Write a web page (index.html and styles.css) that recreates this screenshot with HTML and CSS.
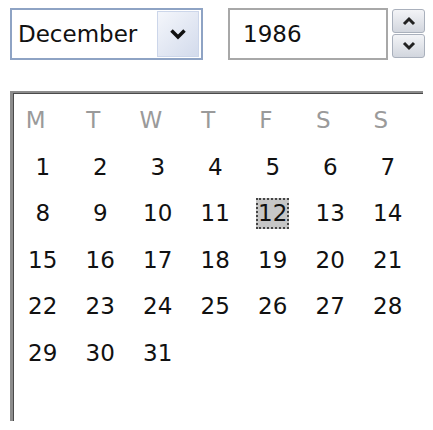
FILE: index.html
```html
<!DOCTYPE html>
<html lang="en">

<head>
    <meta charset="UTF-8" />
    <meta name="viewport" content="width=device-width" />
    <link rel="stylesheet" href="styles.css">
</head>

<body>
    <main class="picker">
        <div class="top">
            <div class="select">
                <span class="value">December</span>
                <span class="drop">
                    <svg width="18" height="14" viewBox="0 0 18 14"><path d="M2.5 3.5 L9 10 L15.5 3.5" fill="none" stroke="#111" stroke-width="3.5"/></svg>
                </span>
            </div>
            <div class="year">1986</div>
            <div class="spin">
                <span class="spin_btn">
                    <svg width="16" height="10" viewBox="0 0 16 10"><path d="M3 8 L8 3 L13 8" fill="none" stroke="#222" stroke-width="3"/></svg>
                </span>
                <span class="spin_btn">
                    <svg width="16" height="10" viewBox="0 0 16 10"><path d="M3 2 L8 7 L13 2" fill="none" stroke="#222" stroke-width="3"/></svg>
                </span>
            </div>
        </div>

        <div class="cal">
            <div class="grid">
                <span class="head">M</span><span class="head">T</span><span class="head">W</span><span class="head">T</span><span class="head">F</span><span class="head">S</span><span class="head">S</span>
                <span>1</span><span>2</span><span>3</span><span>4</span><span>5</span><span>6</span><span>7</span>
                <span>8</span><span>9</span><span>10</span><span>11</span><span><b class="today">12</b></span><span>13</span><span>14</span>
                <span>15</span><span>16</span><span>17</span><span>18</span><span>19</span><span>20</span><span>21</span>
                <span>22</span><span>23</span><span>24</span><span>25</span><span>26</span><span>27</span><span>28</span>
                <span>29</span><span>30</span><span>31</span>
            </div>
        </div>
    </main>
</body>

</html>
```

FILE: styles.css
```css
/* === date picker === */

body {
    margin: 0;
    background: #fff;
    font-family: "DejaVu Sans", sans-serif;
    font-size: 23px;
    color: #111;
}

.picker {
    /* outer spacing */
    padding: 8px 0 0 10px;
}

.top {
    /* month + year row */
    display: flex;
    align-items: flex-start;
    height: 52px;
}

.select {
    /* month box */
    box-sizing: border-box;
    width: 193px;
    height: 52px;
    border: 2px solid #8ea3c4;
    display: flex;
    align-items: center;
    padding-left: 6px;
}

.drop {
    /* dropdown arrow button */
    margin-left: auto;
    margin-right: 2px;
    width: 42px;
    height: 46px;
    box-sizing: border-box;
    border: 1px solid #ccd6ea;
    background: linear-gradient(135deg, #f4f6fb, #d3dbec);
    display: flex;
    align-items: center;
    justify-content: center;
}

.year {
    /* year text box */
    box-sizing: border-box;
    width: 160px;
    height: 52px;
    margin-left: 25px;
    border: 2px solid #a8a8a8;
    padding-left: 13px;
    display: flex;
    align-items: center;
}

.spin {
    /* up / down buttons */
    margin-left: 4px;
    margin-top: 1px;
    width: 33px;
    display: flex;
    flex-direction: column;
    gap: 1px;
}

.spin_btn {
    box-sizing: border-box;
    height: 24px;
    border: 1px solid #a9b0bc;
    border-radius: 3px;
    background: linear-gradient(#f3f4f7, #d2d6de);
    display: flex;
    align-items: center;
    justify-content: center;
}

.cal {
    /* month view with sunken border */
    margin-top: 31px;
    width: 413px;
    height: 330px;
    box-sizing: border-box;
    border-top: 2px solid #8c8c8c;
    border-left: 3px solid #8c8c8c;
    box-shadow: inset 1px 1px 0 #4a4a4a;
}

.grid {
    display: grid;
    grid-template-columns: repeat(7, 57.5px);
    grid-auto-rows: 46.5px;
    padding: 4px 0 0 1px;
}

.grid span {
    display: flex;
    align-items: center;
    justify-content: center;
}

.grid .head {
    /* weekday letters */
    color: #9a9a9a;
    padding-right: 14px;
}

.today {
    /* selected day */
    font-weight: normal;
    line-height: 27px;
    border: 2px dotted #444;
    background: #c6c6c6;
}
```
